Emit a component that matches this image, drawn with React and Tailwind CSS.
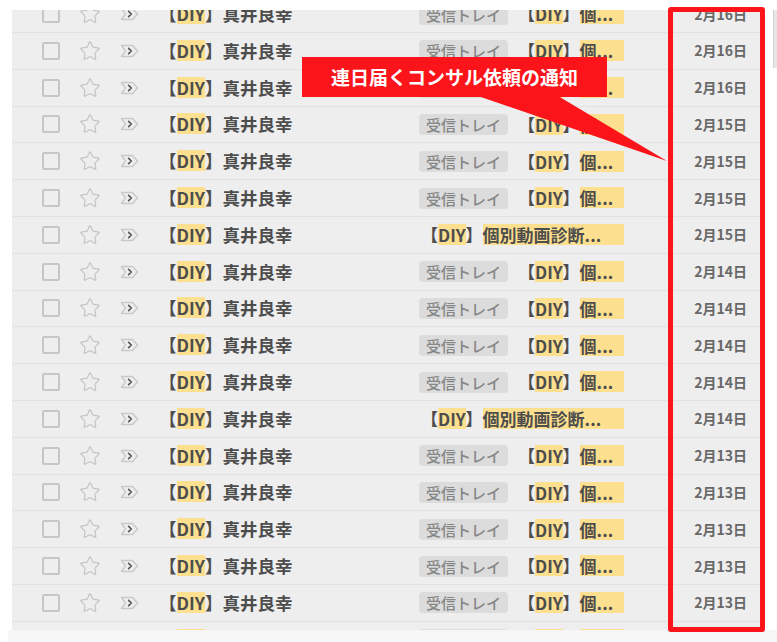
import { Star } from 'lucide-react';

const font = { fontFamily: '"Noto Sans CJK JP", "Noto Sans", sans-serif' };

const rows = [
  { date: '2月16日' },
  { date: '2月16日' },
  { date: '2月16日' },
  { date: '2月15日' },
  { date: '2月15日' },
  { date: '2月15日' },
  { date: '2月15日', noChip: true },
  { date: '2月14日' },
  { date: '2月14日' },
  { date: '2月14日' },
  { date: '2月14日' },
  { date: '2月14日', noChip: true },
  { date: '2月13日' },
  { date: '2月13日' },
  { date: '2月13日' },
  { date: '2月13日' },
  { date: '2月13日' },
  { date: '2月13日' },
];

function Marker() {
  return (
    <svg width="19" height="14" viewBox="0 0 19 14" fill="none">
      <path d="M1.5 1.5H12.5L17.5 7L12.5 12.5H1.5L5.5 7Z" stroke="#c9c9c9" strokeWidth="1.5" strokeLinejoin="round" />
      <path d="M8.6 4.4L11.4 7L8.6 9.6" stroke="#555" strokeWidth="1.6" strokeLinejoin="round" strokeLinecap="round" />
    </svg>
  );
}

function Hl({ children, className = '' }) {
  return (
    <span className={`inline-block bg-[#fde08f] leading-[21px] h-[21px] ${className}`}>{children}</span>
  );
}

function MailRow({ date, noChip }) {
  return (
    <div className="flex items-center h-[36.8px] shrink-0 border-b border-[#e2e2e2]">
      <div className="ml-[30px] w-[18px] h-[18px] border-2 border-[#c6c6c6] rounded-[2px]" />
      <div className="ml-[19px] w-[22px] flex justify-center">
        <Star size={22} strokeWidth={1.3} color="#c4c4c4" />
      </div>
      <div className="ml-[19px] w-[19px] flex">
        <Marker />
      </div>
      <div className="ml-[20px] w-[260px] text-[17.5px] font-bold text-[#4d4d4d] whitespace-nowrap">
        【<Hl>DIY</Hl>】真井良幸
      </div>
      {noChip ? (
        <div className="pl-[2px] text-[17px] font-bold text-[#4d4d4d] whitespace-nowrap">
          【<Hl>DIY</Hl>】<Hl className="w-[141px]">個別動画診断...</Hl>
        </div>
      ) : (
        <div className="flex items-center whitespace-nowrap">
          <span className="w-[89px] h-[21px] rounded-[4px] bg-[#dcdcdc] text-[15px] leading-[21px] text-[#868686] text-center font-medium">
            受信トレイ
          </span>
          <span className="ml-[10px] text-[17px] font-bold text-[#4d4d4d]">
            【<Hl>DIY</Hl>】<Hl className="w-[44px]">個...</Hl>
          </span>
        </div>
      )}
      <div className="ml-auto pr-[18px] text-[14px] font-bold text-[#686868]">{date}</div>
    </div>
  );
}

export default function App() {
  return (
    <div className="w-[777px] h-[642px] bg-white relative overflow-hidden" style={font}>
      {/* Mail list */}
      <div className="flex pt-[10px] pl-[12px]">
        <div className="w-[753px] h-[620px] bg-[#eeeeee] overflow-hidden flex flex-col">
          <div className="mt-[-13.8px] flex flex-col">
            {rows.map((r, i) => (
              <MailRow key={i} {...r} />
            ))}
          </div>
        </div>
        <div className="ml-[8px] w-[4px] h-[58px] bg-[#e6e6e6] border-l border-[#d2d2d2]" />
      </div>
      <div className="ml-[8px] h-[12px] bg-[#f6f6f6]" />

      {/* Highlight frame */}
      <div className="absolute left-[668px] top-[7px] w-[97px] h-[625px] border-[5px] border-[#fb1419] rounded-[3px]" />

      {/* Callout */}
      <svg className="absolute left-0 top-0" width="777" height="642">
        <polygon points="478,96 558,96 667,161" fill="#fb1419" />
      </svg>
      <div className="absolute left-[302px] top-[57px] w-[305px] h-[40px] bg-[#fb1419] flex items-center justify-center text-white text-[19px] font-bold">
        連日届くコンサル依頼の通知
      </div>
    </div>
  );
}
